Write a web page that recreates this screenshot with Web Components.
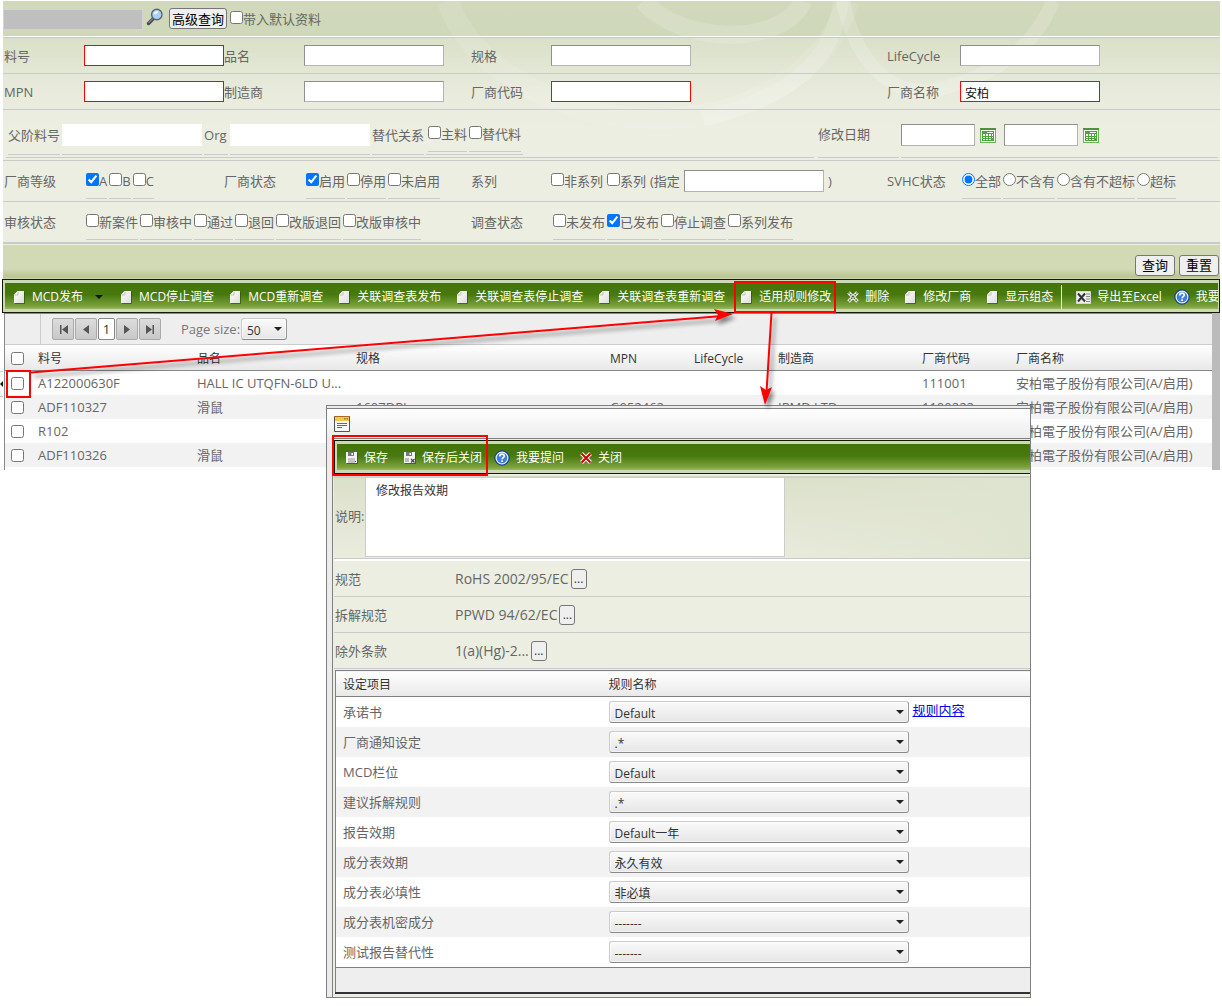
<!DOCTYPE html>
<html lang="zh-CN">
<head>
<meta charset="utf-8">
<title>MCD</title>
<style>
  body { margin: 0; background: #fff; color: #666; font: 13px/20px "Open Sans", "Noto Sans CJK SC", sans-serif; position: relative; overflow-x: hidden; min-height: 1006px; }
</style>
</head>
<body>
<main-page></main-page>
<script>
const define = (name, html, setup) => {
  const t = document.createElement('template');
  t.innerHTML = html;
  customElements.define(name, class extends HTMLElement {
    connectedCallback() {
      if (this.shadowRoot) return;
      this.attachShadow({ mode: 'open' }).append(t.content.cloneNode(true));
      if (setup) setup(this, this.shadowRoot);
    }
  });
};

/* ---------- icons ---------- */
const ICONS = {
  page: '<svg width="12" height="13" viewBox="0 0 12 13"><defs><linearGradient id="g" x1="0" y1="0" x2="1" y2="1"><stop offset="0" stop-color="#fff"/><stop offset="1" stop-color="#ddd"/></linearGradient></defs><path d="M4 1h7v12H1V4z" fill="#2b4a08" opacity=".6"/><path d="M3.500 0H10v12H0V3.500z" fill="url(#g)"/><path d="M.5 4h3.500V.5" fill="none" stroke="#aaa" stroke-width=".7"/></svg>',
  del: '<svg width="12" height="12" viewBox="0 0 12 12"><path d="M1.500 1.500l9 9M10.500 1.500l-9 9" stroke="#e8f0d8" stroke-width="3.600" fill="none"/><path d="M1.500 1.500l9 9M10.500 1.500l-9 9" stroke="#555" stroke-width="1.400" fill="none" stroke-dasharray="1.500 1"/></svg>',
  close: '<svg width="12" height="12" viewBox="0 0 12 12"><path d="M1.500 1.500l9 9M10.500 1.500l-9 9" stroke="#fff" stroke-width="4" fill="none"/><path d="M1.500 1.500l9 9M10.500 1.500l-9 9" stroke="#d00000" stroke-width="2" fill="none"/></svg>',
  excel: '<svg width="15" height="13" viewBox="0 0 15 13"><path d="M.5.5h14v12H.5z" fill="#eee" stroke="#d8d8d8"/><path d="M10 3h4M10 5.500h4M10 8h4M10 10.500h4" stroke="#888" stroke-width="1"/><path d="M2 2.500l7 8M9 2.500l-7 8" stroke="#333" stroke-width="2"/></svg>',
  help: '<svg width="16" height="16" viewBox="0 0 16 16"><circle cx="8" cy="8" r="7.200" fill="#2559b8" stroke="#123a86" stroke-width="1"/><circle cx="8" cy="8" r="5.900" fill="#3f7fe0" stroke="#e6efff" stroke-width="1.200"/><path d="M5.800 6.400c0-3 4.600-2.800 4.400-.2-.1 1.500-2 1.500-2.100 3.100" fill="none" stroke="#fff" stroke-width="1.700"/><rect x="7.200" y="10.300" width="1.800" height="1.700" fill="#fff"/></svg>',
  save: '<svg width="12" height="12" viewBox="0 0 12 12"><path d="M1 1h11v11H1z" fill="#2b4a08" opacity=".6"/><path d="M0 0h11v11H0z" fill="#f2f2f2"/><path d="M2 0h6v4H2z" fill="#777"/><path d="M5.500 1h1.500v2H5.500z" fill="#fff"/><path d="M2 6h7v5H2z" fill="#c4c4c4"/><path d="M9 9h1v1H9z" fill="#444"/></svg>',
  saveclose: '<svg width="12" height="12" viewBox="0 0 12 12"><path d="M1 1h11v11H1z" fill="#2b4a08" opacity=".6"/><path d="M0 0h11v11H0z" fill="#f2f2f2"/><path d="M2 0h6v4H2z" fill="#777"/><path d="M5.500 1h1.500v2H5.500z" fill="#fff"/><path d="M1 6h4v4H1z" fill="#bbb"/><path d="M7 7l3.500 3.500M10.500 7L7 10.500" stroke="#444" stroke-width="1.200"/></svg>',
  search: '<svg width="18" height="18" viewBox="0 0 18 18"><path d="M7.500 10.500L2.500 15.500" stroke="#454a50" stroke-width="3.400" stroke-linecap="round"/><path d="M7 10.500L2.500 15" stroke="#9aa" stroke-width="1"/><circle cx="10.800" cy="6.500" r="5.200" fill="#a9d0f5" stroke="#5c6570" stroke-width="1.400"/><path d="M7.500 6.500a3.400 3.400 0 0 1 5-3c-1 2-2.500 3-5 3z" fill="#eef7ff"/></svg>',
  calendar: '<svg width="16" height="15" viewBox="0 0 16 15" shape-rendering="crispEdges"><path d="M0 0h16v15H0z" fill="#6cb55a"/><path d="M1 2h14v12H1z" fill="#fff"/><path d="M0 0h16v2H0z" fill="#4a9438"/><path d="M2 3h12v10H2z" fill="#4da33c"/><path d="M7 4h6v1H7zM6 6h2v2H6zM9 6h2v2H9zM12 6h1v2h-1zM3 6h2v2H3zM3 9h2v1H3zM6 9h2v1H6zM9 9h2v1H9zM12 9h1v1h-1zM3 11h2v1H3zM6 11h2v1H6zM9 11h2v1H9z" fill="#fff"/></svg>',
  form: '<svg width="16" height="16" viewBox="0 0 16 16"><path d="M.5.5h15v15H.5z" fill="#fafafa" stroke="#555"/><path d="M1 1h14v4H1z" fill="#f7c64a"/><path d="M0 0h16v1H0z" fill="#a86a20"/><path d="M10 2h1.500v1.500H10zM12.500 2H14v1.500h-1.500z" fill="#6b8f2d"/><path d="M3 7.500h10M3 9.500h10M3 11.500h5" stroke="#3d8a34"/></svg>'
};
define('ui-icon', '<style>:host{display:inline-flex;flex:none}svg{display:block}</style>', (h, r) => {
  r.innerHTML += ICONS[h.getAttribute('name')];
});

/* ---------- labelled tick box / radio ---------- */
define('check-item', `<style>
  :host{display:flex;height:34px;border-bottom:1px solid #c9cacc}
  :host([plain]){border:0}
  label{display:flex;align-items:center;white-space:nowrap}
  input{width:13px;height:13px;margin:0 0 3px;flex:none}
  </style><label><input type="checkbox"><span><slot></slot></span></label>`, (h, r) => {
  const i = r.querySelector('input');
  if (h.hasAttribute('radio')) { i.type = 'radio'; i.name = 'svhc'; }
  i.checked = h.hasAttribute('checked');
});

/* ---------- labelled text box; both parts become cells of the row's grid ---------- */
define('text-field', `<style>
  :host{display:contents}
  label{white-space:nowrap}
  input{box-sizing:border-box;width:140px;height:21px;margin:0;padding:2px 4px 0;border:1px solid;border-color:#8e8f8f #b4b4b4 #b4b4b4 #8e8f8f;background:#fff;font:12px "Open Sans","Noto Sans CJK SC",sans-serif;color:#111}
  :host([required]) input{border-color:red}
  </style><label for="f"><slot></slot></label><input id="f" type="text">`, (h, r) => {
  r.querySelector('input').value = h.getAttribute('value') || '';
});

/* ---------- drop-down ---------- */
define('drop-down', `<style>
  :host{display:inline-grid;width:300px;align-items:center}
  select,svg{grid-area:1/1}
  select{appearance:none;box-sizing:border-box;width:100%;height:22px;margin:0;padding:3px 20px 0 5px;border:1px solid #ccc;border-color:#ccc #999 #888 #ccc;border-radius:3px;background:linear-gradient(#fafafa,#e6e6e6);box-shadow:inset 0 0 0 1px #fff8;color:#333;font:12px/18px "Open Sans","Noto Sans CJK SC",sans-serif}
  svg{justify-self:end;margin-right:5px;pointer-events:none}
  </style><select><option></option></select><svg width="8" height="4" viewBox="0 0 8 4"><path d="M0 0h8L4 4z" fill="#222"/></svg>`, (h, r) => {
  r.querySelector('option').textContent = h.getAttribute('value');
  r.querySelector('select').setAttribute('aria-label', h.getAttribute('label') || 'select');
});

/* ---------- toolbar ---------- */
define('tool-bar', `<style>
  :host{display:block;border:1px solid #111d05;background:#cfd8b4;padding:3px 1px 3px 2px;overflow:hidden}
  div{display:flex;align-items:center;box-sizing:border-box;height:26px;overflow:hidden;padding:2px 0 0 9px;gap:16px;background:linear-gradient(#43740a,#47790e 45%,#7aa03b 88%,#9bb766)}
  </style><div><slot></slot></div>`);
define('tool-item', `<style>
  :host{display:flex;flex:none}
  :host([icon=help]){margin-left:-4px}
  button{display:flex;align-items:center;gap:6px;margin:0;padding:0;border:0;background:none;color:#fff;font:12px/20px "Open Sans","Noto Sans CJK SC",sans-serif;white-space:nowrap}
  .menu{margin:0 2px 0 6px}
  .ic{display:flex;flex:none}
  </style><button type="button"><i class="ic"></i><span><slot></slot></span></button>`, (h, r) => {
  r.querySelector('.ic').innerHTML = ICONS[h.getAttribute('icon')];
  if (h.hasAttribute('menu')) r.querySelector('button').insertAdjacentHTML('beforeend', '<svg class="menu" width="8" height="4" viewBox="0 0 8 4"><path d="M0 0h8L4 4z" fill="#111"/></svg>');
});

/* ---------- search form ---------- */
define('search-form', `<style>
  :host{display:block;position:relative;margin:1px 2px 0 3px;background:#eceee1}
  .art{position:absolute;left:0;top:0;width:100%;height:160px;pointer-events:none}
  .top,.row,.foot{position:relative}
  .back{background:linear-gradient(#d3dabd,#d8dec6 30px,#e8ebdc 90px,#eceee1 130px)}
  .top{display:flex;align-items:center;height:35px;background:linear-gradient(#d1d8bb,#cfd8ba);border-bottom:1px solid #fff}
  .top .code{width:140px;height:21px;box-sizing:border-box;border:1px solid #d4d4d4;background:#bfbfbf;margin:2px 3px 0 0;padding:0}
  .top ui-icon{margin-bottom:3px}
  button{margin:0;padding:0 6px;height:21px;box-sizing:border-box;border:1px solid #767676;border-radius:3px;background:#efefef;color:#000;font:13px/18px "Open Sans","Noto Sans CJK SC",sans-serif}
  .top button{padding:0 2px;margin:0 3px 0 5px}
  .row{display:grid;grid-template-columns:80px 140px 80px 167px 80px 1fr 73px 260px;align-items:center;height:35px;padding-left:1px;border-bottom:1px solid #c9cacc}
  .first{border-top:1px solid #c9cacc}
  .tall{height:40px}
  .last{border-bottom-width:2px}
  .checks{display:flex;gap:2px;padding-left:2px;align-items:center;white-space:nowrap}
  .wide{grid-column:span 3}
  .nested{display:flex;gap:4px;height:43px;padding:5px 2px 2px 3px;align-items:stretch}
  .grp{display:flex;gap:2px;border-bottom:1px solid #c9cacc;align-items:center;box-sizing:border-box}
  .grp.l{flex:1;padding:0 0 2px 2px}
  .cell{display:flex;align-items:center;height:38px;border-bottom:1px solid #c9cacc;gap:2px;white-space:nowrap}
  .cell.c{padding:0 2px}
  .cell.o{width:24px}
  .cell input{width:140px;height:22px;box-sizing:border-box;border:0;margin:0;background:#fff}
  .grp.date{gap:5px;width:317px;margin-left:-2px;padding-bottom:2px}
  .date input{width:74px;height:22px;box-sizing:border-box;margin:0;border:1px solid;border-color:#8e8f8f #b4b4b4 #b4b4b4 #8e8f8f}
  .date input+ui-icon+input{margin-left:3px}
  .grp.t{width:81px;padding-bottom:4px}
  .ser{padding-left:0;gap:4px}
  .ser input{width:140px;height:22px;box-sizing:border-box;margin:0;border:1px solid;border-color:#8e8f8f #b4b4b4 #b4b4b4 #8e8f8f}
  .foot{display:flex;justify-content:flex-end;align-items:center;gap:4px;height:34px;padding:1px 1px 0 0;box-sizing:border-box;margin-top:1px;background:linear-gradient(#d2d9b5 70%,#b9c592 94%,#cdd5ad)}
  .foot button{margin-top:5px}
</style>
<div class="back">
  <div class="top"><input class="code" disabled aria-label="编号"><ui-icon name="search"></ui-icon><button type="button">高级查询</button><check-item plain>带入默认资料</check-item></div>
  <svg class="art" viewBox="0 0 1217 160" preserveAspectRatio="none"><g fill="none" stroke="#fff"><path d="M445 0C470 80 600 140 720 110C790 88 830 50 845 0" stroke-width="22" opacity=".1"/><path d="M640 0C680 45 780 45 800 0" stroke-width="18" opacity=".16"/><path d="M838 0C830 60 790 95 700 118" stroke-width="16" opacity=".14"/><path d="M1050 0C1030 50 990 75 930 90C880 95 850 50 840 0" stroke-width="14" opacity=".17"/></g></svg>
  <div class="row first"><text-field required>料号</text-field><text-field>品名</text-field><text-field>规格</text-field><text-field>LifeCycle</text-field></div>
  <div class="row"><text-field required>MPN</text-field><text-field>制造商</text-field><text-field required>厂商代码</text-field><text-field required value="安柏">厂商名称</text-field></div>
  <div class="row nested">
    <div class="grp l"><div class="cell"><label for="p">父阶料号</label></div><div class="cell"><input id="p"></div><div class="cell o"><label for="o">Org</label></div><div class="cell"><input id="o"></div><div class="cell"><span>替代关系</span></div><div class="cell c"><check-item>主料</check-item><check-item>替代料</check-item></div></div>
    <div class="grp t"><label for="d">修改日期</label></div>
    <div class="grp date"><input id="d"><ui-icon name="calendar"></ui-icon><input aria-label="修改日期"><ui-icon name="calendar"></ui-icon></div>
  </div>
  </div>
  <div class="row tall"><span>厂商等级</span><div class="checks"><check-item checked>A</check-item><check-item>B</check-item><check-item>C</check-item></div><span>厂商状态</span><div class="checks"><check-item checked>启用</check-item><check-item>停用</check-item><check-item>未启用</check-item></div><span>系列</span><div class="checks ser"><check-item plain>非系列</check-item><check-item plain>系列</check-item><label for="s">(指定</label><input id="s"><span>)</span></div><span>SVHC状态</span><form class="checks"><check-item radio checked>全部</check-item><check-item radio>不含有</check-item><check-item radio>含有不超标</check-item><check-item radio>超标</check-item></form></div>
  <div class="row tall last"><span>审核状态</span><div class="checks wide"><check-item>新案件</check-item><check-item>审核中</check-item><check-item>通过</check-item><check-item>退回</check-item><check-item>改版退回</check-item><check-item>改版审核中</check-item></div><span>调查状态</span><div class="checks"><check-item>未发布</check-item><check-item checked>已发布</check-item><check-item>停止调查</check-item><check-item>系列发布</check-item></div></div>
  <div class="foot"><button type="button">查询</button><button type="button">重置</button></div>`);

/* ---------- result list ---------- */
define('result-grid', `<style>
  :host{display:flex;height:157px;margin:0 2px 0 4px;border-left:1px solid #888;box-sizing:border-box}
  .body{flex:1;min-width:0}
  .bar{width:8px;flex:none;background:#bbb}
  .pager{display:flex;background:#eee;border-top:1px solid #888;border-bottom:1px solid #ccc;box-sizing:border-box;height:32px;align-items:center;gap:1px}
  .pager .sp{width:35px;height:100%;border-right:1px solid #ccc;margin-right:10px}
  .pager button{width:22px;height:22px;box-sizing:border-box;margin:0;padding:0;border:1px solid #aaa;border-radius:2px;background:linear-gradient(#dcdcdc,#c8c8c8);display:flex;align-items:center;justify-content:center;font:13px/18px "Open Sans",sans-serif;color:#333}
  .pager .on{width:17px;background:#fff;border-color:#888}
  .pager label{margin:0 2px 0 19px;width:57px;white-space:nowrap;color:#777}
  drop-down{width:46px}
  table{width:100%;border-collapse:collapse;table-layout:fixed}
  th{height:23px;padding:2px 0 0;text-align:left;font:12px/20px "Open Sans","Noto Sans CJK SC",sans-serif;color:#333;background:linear-gradient(#fff,#e8e8e8);border-bottom:1px solid #888}
  td{height:24px;padding:0;line-height:20px;white-space:nowrap}
  tr:nth-child(even) td{background:#f2f2f2}
  input{display:block;width:13px;height:13px;margin:0 0 0 6px}
  </style>
  <div class="body"><div class="pager"><span class="sp"></span>
  <button type="button" aria-label="first"><svg width="9" height="9"><path d="M1 0h1.500v9H1zM9 0v9L3 4.500z" fill="#555"/></svg></button>
  <button type="button" aria-label="previous"><svg width="6" height="9"><path d="M6 0v9L0 4.500z" fill="#555"/></svg></button>
  <button type="button" class="on">1</button>
  <button type="button" aria-label="next"><svg width="6" height="9"><path d="M0 0v9l6-4.500z" fill="#555"/></svg></button>
  <button type="button" aria-label="last"><svg width="9" height="9"><path d="M6.500 0H8v9H6.500zM0 0v9l6-4.500z" fill="#555"/></svg></button>
  <label>Page size:</label><drop-down value="50" label="Page size"></drop-down></div>
  <table><colgroup><col style="width:33px"><col style="width:159px"><col style="width:159px"><col style="width:254px"><col style="width:84px"><col style="width:84px"><col style="width:144px"><col style="width:94px"><col></colgroup><thead></thead><tbody></tbody></table></div><div class="bar"></div>`, (h, r) => {
  const line = (c, t) => `<tr><${t}><input type="checkbox" aria-label="select"></${t}>` + c.map(x => `<${t}>${x}</${t}>`).join('') + '</tr>';
  r.querySelector('thead').innerHTML = line(['料号', '品名', '规格', 'MPN', 'LifeCycle', '制造商', '厂商代码', '厂商名称'], 'th');
  const v = '安柏電子股份有限公司(A/启用)';
  r.querySelector('tbody').innerHTML = [
    ['A122000630F', 'HALL IC UTQFN-6LD U...', '', '', '', '', '111001', v],
    ['ADF110327', '滑鼠', '1607DPI', 'G052462', '', 'IPMD LTD', '1100222', v],
    ['R102', '', '', '', '', '', '', v],
    ['ADF110326', '滑鼠', '', '', '', '', '', v]].map(c => line(c, 'td')).join('');
});

/* ---------- rule window ---------- */
define('rule-window', `<style>
  :host{display:block;position:absolute;left:326px;top:405px;width:705px;box-sizing:border-box;border:1px solid #808080;background:#ececec;padding-top:2px}
  .in{border-top:1px solid #808080}
  .cap{display:flex;align-items:center;height:29px;padding-left:7px;background:linear-gradient(#fff,#ececec)}
  .body{margin-left:5px;border-left:1px solid #808080;border-top:1px solid #808080;padding:1px 0 1px 1px;background:#eceee1}
  tool-bar{border-right:0;padding-right:0}
  .desc{display:flex;margin-top:2px;border-top:2px solid #d0d2c4;border-bottom:1px solid #c9cacc;height:80px;background:linear-gradient(100deg,#d5dcc000 60%,#dfe4d0),linear-gradient(#dbe0ca,#eaecde)}
  .desc label{display:flex;align-items:center;width:30px;padding:0 0 4px 1px;white-space:nowrap}
  textarea{display:block;width:420px;height:79px;box-sizing:border-box;resize:none;margin:0;border:1px solid #ccc;border-top:0;padding:3px 10px;background:#fff;color:#333;font:12px/20px "Open Sans","Noto Sans CJK SC",sans-serif}
  .row{display:grid;grid-template-columns:120px 1fr;align-items:center;height:35px;padding-left:1px;border-bottom:1px solid #c9cacc}
  .rows{border-top:2px solid #fff}
  .row div{display:flex;align-items:center;gap:2px;font-size:14px}
  .row button{width:16px;height:20px;box-sizing:border-box;margin:0;padding:0;border:1px solid #767676;border-radius:3px;background:#efefef;color:#333;font:12px/16px "Open Sans",sans-serif}
  table{width:100%;border-collapse:collapse;table-layout:fixed;background:#fff;border:1px solid #808080;border-right:0}
  .g{padding:1px 0 2px 1px}
  th{height:23px;padding:2px 0 0 7px;text-align:left;font:12px/20px "Open Sans","Noto Sans CJK SC",sans-serif;color:#333;background:linear-gradient(#fff,#e8e8e8);border-bottom:1px solid #808080}
  td{height:30px;padding:0 0 0 7px}
  th+th,td+td{padding-left:0}
  tr:nth-child(even) td{background:#f2f2f2}
  td>div{display:flex;align-items:center;gap:4px}
  a{color:#00e;margin-bottom:4px}
  tfoot td{height:24px;background:#eee;border-top:1px solid #808080;border-bottom:2px solid #333}
  </style>
  <div class="in"><div class="cap"><ui-icon name="form"></ui-icon></div>
  <div class="body"><tool-bar><tool-item icon="save">保存</tool-item><tool-item icon="saveclose">保存后关闭</tool-item><tool-item icon="help">我要提问</tool-item><tool-item icon="close">关闭</tool-item></tool-bar>
  <div class="desc"><label for="t">说明:</label><textarea id="t">修改报告效期</textarea></div>
  <div class="rows"><div class="row"><span>规范</span><div>RoHS 2002/95/EC<button type="button">...</button></div></div>
  <div class="row"><span>拆解规范</span><div>PPWD 94/62/EC<button type="button">...</button></div></div>
  <div class="row"><span>除外条款</span><div>1(a)(Hg)-2...<button type="button">...</button></div></div></div>
  <div class="g"><table><colgroup><col style="width:273px"><col></colgroup><thead><tr><th>设定项目</th><th>规则名称</th></tr></thead><tbody></tbody><tfoot><tr><td colspan="2"></td></tr></tfoot></table></div></div></div>`, (h, r) => {
  r.querySelector('tbody').innerHTML = [['承诺书', 'Default'], ['厂商通知设定', '.*'], ['MCD栏位', 'Default'], ['建议拆解规则', '.*'], ['报告效期', 'Default一年'], ['成分表效期', '永久有效'], ['成分表必填性', '非必填'], ['成分表机密成分', '-------'], ['测试报告替代性', '-------']]
    .map(([n, v], i) => `<tr><td>${n}</td><td><div><drop-down value="${v}" label="${n}"></drop-down>${i ? '' : '<a href="#">规则内容</a>'}</div></td></tr>`).join('');
});

/* ---------- red marks over the page ---------- */
define('mark-layer', `<style>:host{position:absolute;left:0;top:0;pointer-events:none}svg{display:block}</style>
  <svg width="1040" height="500"><g style="filter:drop-shadow(3px 4px 2px #0007)"><path d="M31 372.500L722 316M771.500 313L766.500 392" stroke="red" stroke-width="2" fill="none"/><path d="M733 314l-19-5 4 6-3 6zM765 405l-5-19 6 4 6-3z" fill="red"/></g><g fill="none" stroke="red" stroke-width="2"><path d="M7 371h23v26H7zM735 282h100v30H735zM333 436h154v39H333z"/></g></svg>`);

define('main-page', `<style>
  :host{display:block}
  .tb{margin:0 2px 0 2px}
  .sep{width:1px;height:24px;background:#e5e8dc;flex:none;margin:0 -2px 0 -8px}
  .edge{position:absolute;left:0;top:371px;width:3px;height:26px;box-sizing:border-box;border:1px solid #ccc;border-width:1px 0}
  .edge svg{display:block;margin-top:9px}
  </style>
  <search-form></search-form>
  <tool-bar class="tb"><tool-item icon="page" menu>MCD发布</tool-item><tool-item icon="page">MCD停止调查</tool-item><tool-item icon="page">MCD重新调查</tool-item><tool-item icon="page">关联调查表发布</tool-item><tool-item icon="page">关联调查表停止调查</tool-item><tool-item icon="page">关联调查表重新调查</tool-item><tool-item icon="page">适用规则修改</tool-item><tool-item icon="del">删除</tool-item><tool-item icon="page">修改厂商</tool-item><tool-item icon="page">显示组态</tool-item><span class="sep"></span><tool-item icon="excel">导出至Excel</tool-item><tool-item icon="help">我要</tool-item></tool-bar>
  <result-grid></result-grid>
  <div class="edge"><svg width="3" height="6"><path d="M3 0v6L0 3z" fill="#111"/></svg></div>
  <rule-window></rule-window>
  <mark-layer></mark-layer>`);
</script>
</body>
</html>
